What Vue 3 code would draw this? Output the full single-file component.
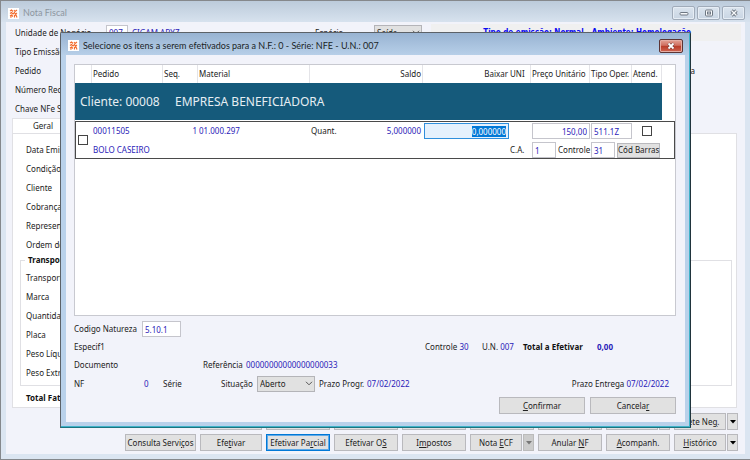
<script setup>
import { onMounted, ref } from 'vue'

const headerLabels = ['Tipo Emissão', 'Pedido', 'Número Recibo', 'Chave NFe Saída']
const generalLabels = ['Data Emissão', 'Condição', 'Cliente', 'Cobrança', 'Representante', 'Ordem de Compra']
const transportLabels = ['Transportadora', 'Marca', 'Quantidade', 'Placa', 'Peso Líquido', 'Peso Extra']

// Each caption is split around its access key: before, key, after.
const actions = [
  { text: ['Consulta Servi', 'ç', 'os'] },
  { text: ['Efe', 't', 'ivar'] },
  { text: ['Efetivar Pa', 'r', 'cial'], active: true },
  { text: ['Efetivar O', 'S', ''] },
  { text: ['I', 'm', 'postos'] },
  { text: ['Nota ', 'E', 'CF'], menu: true, disabled: true },
  { text: ['Anular ', 'N', 'F'] },
  { text: ['', 'A', 'companh.'] },
  { text: ['', 'H', 'istórico'], menu: true },
]
const upperActions = [
  { text: ['', '', ''] },
  { text: ['', '', ''] },
  { text: ['', '', ''] },
  { text: ['', '', ''] },
  { text: ['', '', ''] },
  { text: ['', '', ''], menu: true },
  { text: ['', '', ''], menu: true },
  { text: ['Frete Ne', 'g', '.'], menu: true },
]

const unit = ref('007')
const kind = ref('Saída')
const amount = ref('0,000000')
const price = ref('150,00')
const operation = ref('511.1Z')
const ca = ref('1')
const control = ref('31')
const nature = ref('5.10.1')
const status = ref('Aberto')
const amountInput = ref(null)

onMounted(() => {
  amountInput.value.focus()
  amountInput.value.select()
})
</script>

<template>
  <main class="window">
    <header class="titlebar">
      <svg class="logo" viewBox="0 0 11 11" aria-hidden="true">
        <rect width="11" height="11" fill="#fff" />
        <path d="M2 3l1.500-1 1.500 1.500M6 2l1 1.500 2-1.500M2 5.500l1.500-1 1.500 1.500 1.500-1.500 1 1.500 1.500-1M2 8l1.500-1 1.500 1.500M2.500 9.500l1-1M6.500 9.500V7.500l1.500-.5 1 2.500" fill="none" stroke="#f26a2a" stroke-width="1.100" />
      </svg>
      <h1>Nota Fiscal</h1>
      <div class="window-buttons">
        <button type="button" aria-label="Minimizar">
          <svg viewBox="0 0 10 8"><rect x="1" y="3.500" width="8" height="2.500" rx="1" fill="#f7f9fb" stroke="#6e7782" /></svg>
        </button>
        <button type="button" aria-label="Maximizar">
          <svg viewBox="0 0 10 8"><rect x="1.500" y="1" width="7" height="6" rx="1" fill="#f7f9fb" stroke="#6e7782" /><rect x="3.500" y="3" width="3" height="2" fill="#dbe3ec" stroke="#6e7782" /></svg>
        </button>
        <button type="button" aria-label="Fechar">
          <svg viewBox="0 0 10 8"><path d="M2.500 1.500l5 5M7.500 1.500l-5 5" stroke="#6e7782" stroke-width="3.200" /><path d="M2.500 1.500l5 5M7.500 1.500l-5 5" stroke="#f7f9fb" stroke-width="1.300" /></svg>
        </button>
      </div>
    </header>

    <section class="content">
      <div class="field-row">
        <label class="main-label" for="unit">Unidade de Negócio</label>
        <input id="unit" v-model="unit" class="short">
        <span class="value company">CIGAM ABYZ</span>
        <label class="kind-label" for="kind">Espécie</label>
        <span class="select kind">
          <select id="kind" v-model="kind"><option>Saída</option><option>Entrada</option></select>
          <svg viewBox="0 0 8 5"><path d="M1 .8l3 3 3-3" fill="none" stroke="#555" /></svg>
        </span>
        <strong class="banner">Tipo de emissão: Normal - Ambiente: Homologação</strong>
      </div>
      <div v-for="label in headerLabels" :key="label" class="field-row">
        <span>{{ label }}</span>
        <span v-if="label === 'Pedido'" class="row-end">a</span>
      </div>

      <div class="tab">Geral</div>
      <div class="panel">
        <div class="general">
          <div v-for="label in generalLabels" :key="label" class="field-row">{{ label }}</div>
        </div>
        <fieldset>
          <legend>Transportador</legend>
          <div v-for="label in transportLabels" :key="label" class="field-row">{{ label }}</div>
        </fieldset>
        <strong class="total">Total Faturado</strong>
      </div>

      <nav class="actions">
        <div v-for="(row, r) in [upperActions, actions]" :key="r" class="action-row">
          <div v-for="(action, i) in row" :key="i" class="action">
            <button type="button" class="btn" :class="{ active: action.active }">
              {{ action.text[0] }}<u>{{ action.text[1] }}</u>{{ action.text[2] }}
            </button>
            <button v-if="action.menu" type="button" class="btn arrow" :class="{ off: action.disabled }" aria-label="Mais opções">
              <svg viewBox="0 0 6 4"><path d="M0 0h6l-3 3.500z" fill="currentColor" /></svg>
            </button>
          </div>
        </div>
      </nav>
    </section>

    <section class="dialog" role="dialog" aria-labelledby="dialog-title">
      <header class="dialog-title">
        <svg class="logo" viewBox="0 0 11 11" aria-hidden="true">
          <rect width="11" height="11" fill="#fff" />
          <path d="M2 3l1.500-1 1.500 1.500M6 2l1 1.500 2-1.500M2 5.500l1.500-1 1.500 1.500 1.500-1.500 1 1.500 1.500-1M2 8l1.500-1 1.500 1.500M2.500 9.500l1-1M6.500 9.500V7.500l1.500-.5 1 2.500" fill="none" stroke="#f26a2a" stroke-width="1.100" />
        </svg>
        <h2 id="dialog-title">Selecione os itens a serem efetivados para a N.F.: 0 - Série: NFE - U.N.: 007</h2>
        <button type="button" class="close" aria-label="Fechar">
          <svg viewBox="0 0 10 8"><path d="M2.500 1.500l5 5M7.500 1.500l-5 5" stroke="#6b3a38" stroke-width="3" /><path d="M2.500 1.500l5 5M7.500 1.500l-5 5" stroke="#fff" stroke-width="1.800" /></svg>
        </button>
      </header>

      <div class="dialog-body">
        <div class="list">
          <table>
            <colgroup>
              <col class="c-check"><col class="c-order"><col class="c-seq"><col class="c-material"><col><col class="c-amount">
              <col class="c-unit"><col class="c-price"><col class="c-type"><col class="c-done"><col class="c-end">
            </colgroup>
            <thead>
              <tr>
                <th></th><th>Pedido</th><th>Seq.</th><th>Material</th><th class="right">Saldo</th><th class="right flush">Baixar</th>
                <th>UNI</th><th>Preço Unitário</th><th>Tipo Oper.</th><th>Atend.</th><th class="flush"></th>
              </tr>
            </thead>
            <tbody>
              <tr class="client">
                <td colspan="10"><span class="client-code">Cliente: 00008</span>EMPRESA BENEFICIADORA</td>
                <td class="blank"></td>
              </tr>
            </tbody>
            <tbody class="item">
              <tr>
                <td rowspan="2"><input type="checkbox" aria-label="Selecionar item"></td>
                <td class="value">00011505</td>
                <td class="value right">1</td>
                <td class="value">01.000.297</td>
                <td>
                  <div class="balance"><span>Quant.</span><span class="value">5,000000</span></div>
                </td>
                <td class="tight"><input ref="amountInput" v-model="amount" class="right amount" aria-label="Baixar"></td>
                <td></td>
                <td class="tight"><input v-model="price" class="right" aria-label="Preço Unitário"></td>
                <td class="tight"><input v-model="operation" aria-label="Tipo Oper."></td>
                <td class="center"><input type="checkbox" aria-label="Atend."></td>
                <td></td>
              </tr>
              <tr>
                <td colspan="5" class="value">BOLO CASEIRO</td>
                <td><label for="ca">C.A.</label></td>
                <td colspan="4" class="tight">
                  <div class="control">
                    <input id="ca" v-model="ca" class="mini">
                    <label for="control">Controle</label>
                    <input id="control" v-model="control" class="mini">
                    <button type="button" class="btn barcode">Cód Barras</button>
                  </div>
                </td>
              </tr>
            </tbody>
          </table>
        </div>

        <div class="details">
          <div class="detail-row">
            <label class="d-first" for="nature">Codigo Natureza</label>
            <input id="nature" v-model="nature" class="nature">
          </div>
          <div class="detail-row">
            <span>Especif1</span>
            <span class="summary">
              <span class="s-control">Controle <span class="value">30</span></span>
              <span class="s-unit">U.N. <span class="value">007</span></span>
              <strong class="s-total">Total a Efetivar</strong>
              <strong class="value">0,00</strong>
            </span>
          </div>
          <div class="detail-row">
            <span class="d-doc">Documento</span>
            <span class="d-ref">Referência</span>
            <span class="value">00000000000000000033</span>
          </div>
          <div class="detail-row tall">
            <span class="d-first">NF</span>
            <span class="value d-nf">0</span>
            <span class="d-series">Série</span>
            <label class="d-status" for="status">Situação</label>
            <span class="select status">
              <select id="status" v-model="status"><option>Aberto</option><option>Fechado</option></select>
              <svg viewBox="0 0 8 5"><path d="M1 .8l3 3 3-3" fill="none" stroke="#555" /></svg>
            </span>
            <span class="d-term">Prazo Progr.</span>
            <span class="value">07/02/2022</span>
            <span class="delivery">Prazo Entrega <span class="value">07/02/2022</span></span>
          </div>
          <div class="dialog-actions">
            <button type="button" class="btn"><u>C</u>onfirmar</button>
            <button type="button" class="btn">Cancela<u>r</u></button>
          </div>
        </div>
      </div>
    </section>
  </main>
</template>

<style>
body {
  background: #dbe5f1;
}
</style>

<style scoped>
* {
  box-sizing: border-box;
}

.window {
  position: relative;
  display: flex;
  flex-direction: column;
  min-height: 100vh;
  padding: 0 5px 5px;
  border: 1px solid #85888c;
  border-right: 0;
  background: #dbe5f1;
  color: #222;
  font: 8px/12px "Noto Sans", "Liberation Sans", sans-serif;
  white-space: nowrap;
}

button,
input,
select {
  margin: 0;
  font: inherit;
  color: inherit;
}

.titlebar {
  display: flex;
  align-items: center;
  gap: 4px;
  height: 21px;
  margin: 0 -5px;
  padding: 3px 5px 0 7px;
  background: linear-gradient(#bccbdb, #d7e2ee);
}

.titlebar h1 {
  margin: 0;
  font: 9px/12px Lato, sans-serif;
  color: #8d96a0;
}

.logo {
  width: 11px;
  height: 11px;
}

.window-buttons {
  display: flex;
  gap: 2px;
  margin-left: auto;
}

.window-buttons button {
  display: grid;
  place-items: center;
  width: 23px;
  height: 14px;
  padding: 0;
  border: 1px solid #a0abb9;
  border-radius: 2px;
  background: linear-gradient(#dbe4ee, #c9d5e3);
  box-shadow: inset 0 0 0 1px #e6edf5;
}

.window-buttons svg,
.close svg {
  width: 10px;
  height: 8px;
}

.content {
  display: flex;
  flex: 1;
  flex-direction: column;
  padding: 1px 6px 3px;
  background: #f2f3fa;
}

.field-row {
  display: flex;
  align-items: center;
  height: 19px;
  padding-left: 3px;
}

.main-label {
  width: 91px;
}

input:not([type="checkbox"]) {
  width: 100%;
  height: 16px;
  padding: 0 2px;
  border: 1px solid #c5c5cc;
  border-radius: 0;
  outline: 0;
  background: #fff;
  color: #2a22b8;
}

input[type="checkbox"] {
  display: block;
  width: 10px;
  height: 10px;
  border: 1px solid #444;
  background: #fff;
  appearance: none;
}

input:not([type="checkbox"]).short {
  width: 22px;
}

.value {
  color: #2a22b8;
}

.company {
  width: 187px;
  padding-left: 4px;
}

.kind-label {
  width: 59px;
}

.select {
  position: relative;
  display: inline-flex;
}

.select select {
  width: 100%;
  height: 16px;
  padding: 0 2px;
  border: 1px solid #b4b4b8;
  border-radius: 0;
  background: #e1e1e1;
  appearance: none;
}

.select svg {
  position: absolute;
  right: 2px;
  top: 5px;
  width: 8px;
  height: 5px;
  pointer-events: none;
}

.kind {
  width: 48px;
  margin-right: 9px;
}

.banner {
  flex: 1;
  height: 17px;
  margin-right: -2px;
  padding-right: 50px;
  background: #f0f0f0;
  color: #0a0af0;
  font: bold 8px/17px "DejaVu Sans Condensed", "Noto Sans", sans-serif;
  text-align: right;
}

.row-end {
  margin-left: auto;
  padding-right: 44px;
}

.tab {
  width: 60px;
  height: 15px;
  padding-left: 20px;
  border: 1px solid #e2e2e6;
  border-bottom: 0;
  background: #fff;
  line-height: 14px;
}

.panel {
  flex: 1;
  margin-right: 2px;
  padding: 6px 4px 0 7px;
  border: 1px solid #e0e0e4;
  background: #fff;
}

.general {
  padding-left: 3px;
}

fieldset {
  min-width: 0;
  margin: 0;
  padding: 2px 2px 3px;
  border: 1px solid #e0e0e4;
}

legend {
  height: 12px;
  padding: 0 3px;
  margin-left: 2px;
  color: #111;
  font-weight: bold;
}

.total {
  display: block;
  padding: 6px 6px 2px;
  color: #111;
}

.actions {
  display: grid;
  gap: 4px;
  margin: 5px 1px 0 0;
}

.action-row {
  display: flex;
  justify-content: flex-end;
  gap: 4px;
}

.action {
  display: flex;
  gap: 1px;
  width: 64px;
}

.action:nth-last-child(9) {
  width: 71px;
}

.action:nth-last-child(8) {
  width: 62px;
}

.btn {
  flex: 1;
  min-width: 0;
  height: 17px;
  padding: 0;
  border: 1px solid #b9b9bd;
  background: #e1e1e1;
  line-height: 14px;
}

.btn.active {
  border: 1px solid #0078d7;
  box-shadow: inset 0 0 0 1px #5fa9e6;
}

.btn.arrow {
  display: grid;
  flex: 0 0 11px;
  place-items: center;
  color: #000;
}

.btn.off {
  background: #ccc;
  border-color: #bbb;
  color: #777;
}

.arrow svg {
  width: 6px;
  height: 4px;
}

.dialog {
  position: absolute;
  inset: 31px 59px 31px 59px;
  display: flex;
  flex-direction: column;
  padding: 0 5px 5px;
  border: 1px solid #5c6268;
  border-right-color: #20343c;
  border-bottom-color: #1c7480;
  border-radius: 2px 2px 0 0;
  background: #b9d1ea;
  box-shadow: inset -1px -1px 0 #3fb2c8;
}

.dialog-title {
  display: flex;
  align-items: center;
  gap: 4px;
  height: 22px;
  margin: 0 -4px 0 -5px;
  padding: 3px 6px 0 7px;
  background: linear-gradient(#98b3d2, #b7cfe8);
}

.dialog-title h2 {
  margin: 0;
  color: #1a1f26;
  font: 9px/12px Lato, sans-serif;
}

.close {
  display: grid;
  place-items: center;
  width: 24px;
  height: 14px;
  margin-left: auto;
  padding: 0;
  border: 1px solid #5c3434;
  border-radius: 2px;
  background: linear-gradient(#e4a396, #cf6f60 45%, #b93b28 50%, #cf6552);
  box-shadow: inset 0 0 0 1px #e5ada4;
}

.dialog-body {
  display: flex;
  flex: 1;
  flex-direction: column;
  padding: 9px 9px 8px 8px;
  background: #f2f3fa;
}

.list {
  flex: 1;
  border: 1px solid #c8c9d0;
  background: #fff;
}

table {
  width: 100%;
  border-spacing: 0;
  table-layout: fixed;
}

th,
td {
  padding: 0 1px;
  font-weight: normal;
  text-align: left;
}

th {
  height: 18px;
  border-right: 1px solid #e4e4e8;
}

th.flush {
  border-right: 0;
}

.c-check { width: 17px; }
.c-order { width: 71px; }
.c-seq { width: 35px; }
.c-material { width: 112px; }
.c-amount { width: 86px; }
.c-unit { width: 22px; }
.c-price { width: 59px; }
.c-type { width: 42px; }
.c-done { width: 30px; }
.c-end { width: 13px; }

.right {
  text-align: right;
}

.client td {
  height: 38px;
  padding-left: 5px;
  border-bottom: 1px solid #fff;
  background: #155a7b;
  color: #e6eef3;
  font-size: 12px;
}

.client .blank {
  background: #fff;
}

.client-code {
  display: inline-block;
  width: 95px;
}

.item {
  outline: 1px solid #4a4a4a;
  outline-offset: -1px;
}

.item tr {
  height: 19px;
}

.item td[rowspan] {
  padding-left: 3px;
}

.item .tight {
  padding: 1px 0 0 1px;
}

.balance {
  display: flex;
  justify-content: space-between;
  padding-right: 1px;
}

input:not([type="checkbox"]).amount {
  border-color: #2f8fdc;
  background: #e5f1fd;
}

.amount::selection {
  background: #0078d7;
  color: #fff;
}

.center input {
  margin: 0 auto;
}

.control {
  display: flex;
  align-items: center;
}

input:not([type="checkbox"]).mini {
  width: 24px;
}

.control label {
  width: 35px;
  padding-left: 2px;
}

.btn.barcode {
  flex: 0 0 43px;
  height: 15px;
  margin-left: 2px;
  line-height: 12px;
}

.details {
  padding-top: 4px;
}

.detail-row {
  display: flex;
  align-items: center;
  height: 18px;
}

.detail-row.tall {
  height: 20px;
}

.d-first {
  width: 68px;
}

input:not([type="checkbox"]).nature {
  width: 39px;
}

.summary {
  display: flex;
  margin-left: auto;
}

.s-control {
  width: 57px;
}

.s-unit {
  width: 41px;
}

.s-total {
  width: 74px;
  color: #111;
}

.s-total + .value {
  width: 79px;
}

.d-doc {
  width: 129px;
}

.d-ref {
  width: 43px;
}

.d-nf {
  width: 21px;
  padding-left: 2px;
}

.d-series {
  width: 58px;
}

.d-status {
  width: 36px;
}

.status {
  width: 58px;
  margin-right: 4px;
}

.d-term {
  width: 48px;
}

.delivery {
  margin-left: auto;
  padding-right: 7px;
}

.dialog-actions {
  display: flex;
  justify-content: flex-end;
  gap: 5px;
  padding-top: 3px;
}

.dialog-actions .btn {
  flex: 0 0 86px;
}
</style>
